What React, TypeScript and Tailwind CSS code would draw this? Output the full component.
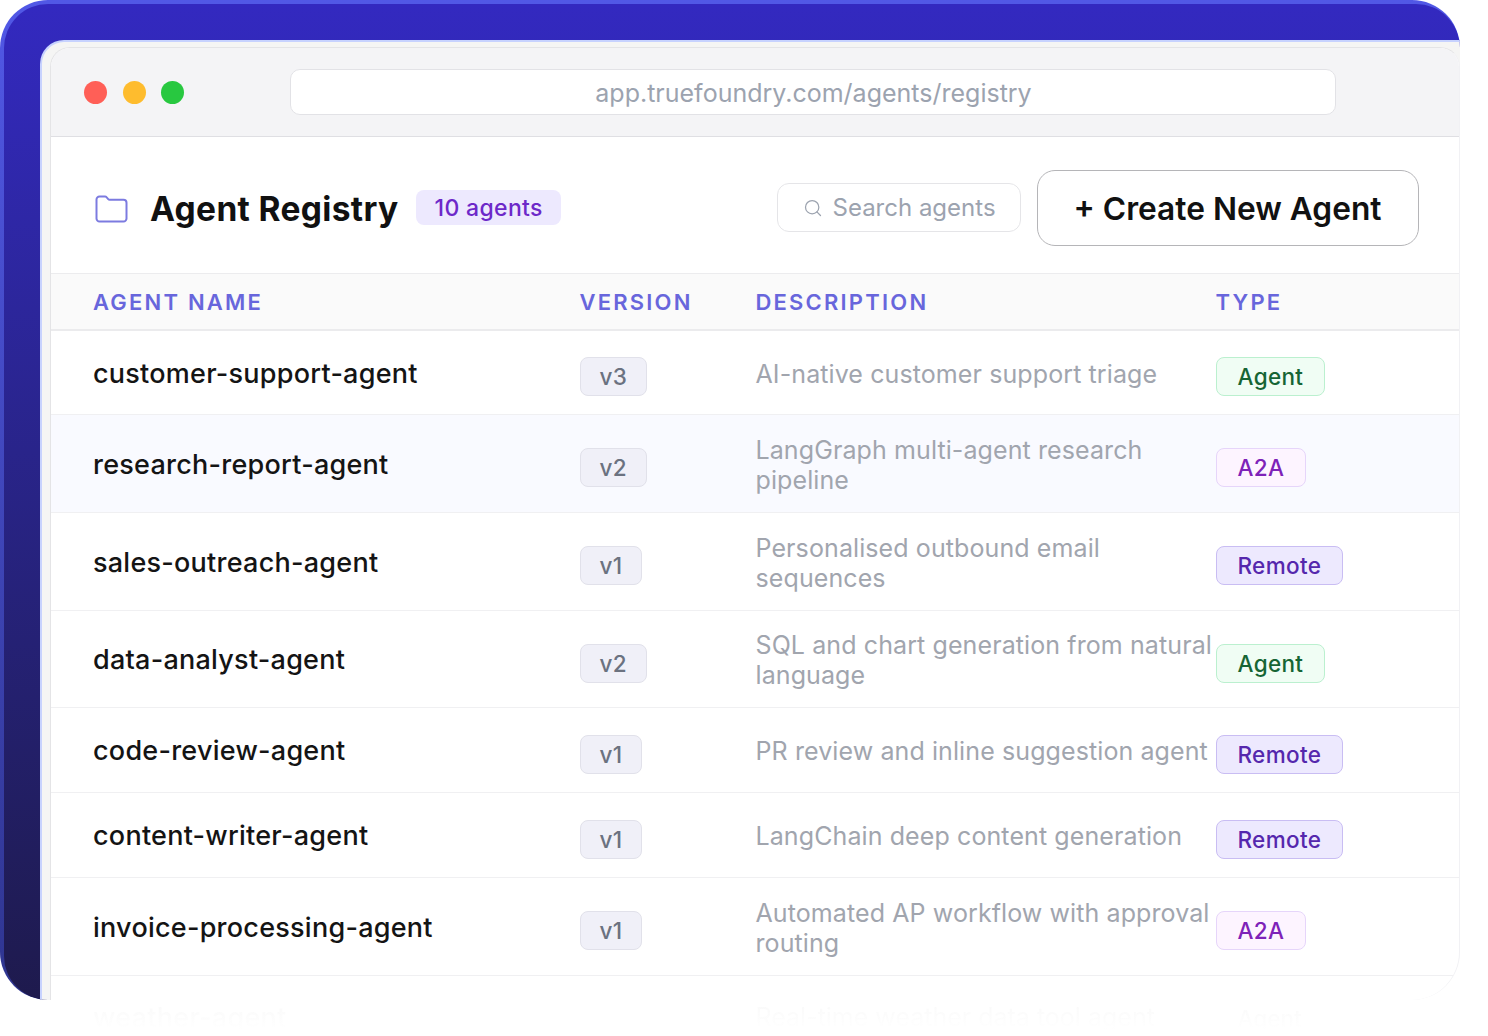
import { Search } from "lucide-react";

type AgentType = "Agent" | "A2A" | "Remote";

type AgentRow = {
  name: string;
  version: string;
  description: string;
  type: AgentType;
  height: string;
  highlighted?: boolean;
};

const agents: AgentRow[] = [
  { name: "customer-support-agent", version: "v3", description: "AI-native customer support triage", type: "Agent", height: "h-[84px]" },
  { name: "research-report-agent", version: "v2", description: "LangGraph multi-agent research pipeline", type: "A2A", height: "h-[98px]", highlighted: true },
  { name: "sales-outreach-agent", version: "v1", description: "Personalised outbound email sequences", type: "Remote", height: "h-[98px]" },
  { name: "data-analyst-agent", version: "v2", description: "SQL and chart generation from natural language", type: "Agent", height: "h-[97px]" },
  { name: "code-review-agent", version: "v1", description: "PR review and inline suggestion agent", type: "Remote", height: "h-[85px]" },
  { name: "content-writer-agent", version: "v1", description: "LangChain deep content generation", type: "Remote", height: "h-[85px]" },
  { name: "invoice-processing-agent", version: "v1", description: "Automated AP workflow with approval routing", type: "A2A", height: "h-[98px]" },
];

const typeStyles: Record<AgentType, string> = {
  Agent: "border-[#bbf0cf] bg-[#f0fdf4] text-[#166534]",
  A2A: "border-[#e6d5fa] bg-[#fdf4ff] text-[#7e22b8]",
  Remote: "border-[#c9bdf3] bg-[#ede9fe] text-[#5527ad]",
};

const columns = "grid grid-cols-[486.5px_176px_460px_1fr] pl-[42px]";
const pill = "flex h-[39px] items-center rounded-lg border pt-0.5 text-[22.5px] leading-none font-medium tracking-[0.35px]";

function FolderIcon() {
  return (
    <svg className="mt-0.5 h-7 w-[33px]" viewBox="0 0 33 28" fill="none" stroke="#7c7be0" strokeWidth="2" strokeLinejoin="round">
      <path d="M1.5 4.5a3 3 0 0 1 3-3H10a2 2 0 0 1 1.5.7l1.7 1.9a2 2 0 0 0 1.5.7H28.500a3 3 0 0 1 3 3V23.500a3 3 0 0 1-3 3h-24a3 3 0 0 1-3-3z" />
    </svg>
  );
}

function TopBar() {
  return (
    <div className="flex h-[89px] items-center border-b border-[#dfdfe3] bg-[#f4f4f6] pl-[33px]">
      <div className="flex gap-[15.5px]">
        <span className="size-[23px] rounded-full bg-[#ff5f57]" />
        <span className="size-[23px] rounded-full bg-[#febc2e]" />
        <span className="size-[23px] rounded-full bg-[#28c840]" />
      </div>
      <div className="ml-[106px] flex h-[46px] w-[1046px] items-center justify-center rounded-[10px] border border-[#e2e2e6] bg-white pt-[3px] pl-px text-[25px] text-[#9ca3af]">
        app.truefoundry.com/agents/registry
      </div>
    </div>
  );
}

function Toolbar() {
  return (
    <div className="flex h-[137px] items-center border-b border-[#ececee] pt-[5px] pr-[40.5px] pl-11">
      <FolderIcon />
      <h1 className="ml-[22px] pt-[3px] text-[33.5px] font-bold tracking-[0.35px] text-[#111111]">Agent Registry</h1>
      <span className="ml-[18px] flex h-[35px] items-center rounded-lg bg-[#ede9fe] px-[18px] pt-px text-[23px] font-medium tracking-[0.35px] text-[#6d28c9]">
        10 agents
      </span>
      <div className="ml-auto flex h-[49px] w-[244px] items-center rounded-xl border border-[#e5e5e8] pl-[25px] text-[24px] text-[#9ca3af]">
        <Search className="mr-[10px] size-5" strokeWidth={1.5} />
        Search agents
      </div>
      <button className="ml-4 h-[76px] w-[382px] rounded-[18px] border border-[#b5b5b8] pt-[3px] text-[31.7px] font-semibold text-[#111111]">
        + Create New Agent
      </button>
    </div>
  );
}

function AgentTable() {
  return (
    <div className="whitespace-nowrap">
      <div className={`${columns} h-[57px] items-center border-b-2 border-[#ebebed] bg-[#fafafa] pt-0.5 text-[22px] font-semibold tracking-[2.2px] text-[#6866dc]`}>
        <span>AGENT NAME</span>
        <span>VERSION</span>
        <span>DESCRIPTION</span>
        <span>TYPE</span>
      </div>
      {agents.map((agent) => (
        <div
          key={agent.name}
          className={`${columns} ${agent.height} items-center border-b border-[#f0f0f2] ${agent.highlighted ? "bg-[#f9faff]" : ""}`}
        >
          <span className="pt-[3px] text-[27px] font-medium tracking-[0.25px] text-[#141414]">{agent.name}</span>
          <span className="flex pt-2">
            <span className={`${pill} border-[#e1e1ea] bg-[#f0f0f8] px-[19px] text-[#6b7280]`}>{agent.version}</span>
          </span>
          <span className="w-[464px] pt-0.5 text-[25px] leading-[30px] tracking-[0.1px] whitespace-normal text-[#a1a5ae]">{agent.description}</span>
          <span className="flex pt-2">
            <span className={`${pill} ${typeStyles[agent.type]} px-[21px]`}>{agent.type}</span>
          </span>
        </div>
      ))}
    </div>
  );
}

export default function App() {
  return (
    <div className="h-[1036px] w-[1488px] overflow-hidden bg-white font-['Inter',sans-serif]">
      <div className="h-[1000px] w-[1460px] overflow-hidden rounded-[48px] rounded-br-none bg-linear-to-b from-[#5158e6] to-[#2f3590] pt-1 pl-1">
        <div className="h-full w-full rounded-tl-[44px] rounded-tr-[44px] rounded-bl-[44px] bg-linear-to-b from-[#3329c0] to-[#1e1a4d] pt-9 pl-9">
          <div className="h-[960px] w-[1420px] overflow-hidden rounded-tl-3xl border-t-2 border-l-2 border-[#c7d2fe] bg-[#f5f5f4] pt-[5px] pl-2">
            {/* lower half turns white so the rounded bottom corner blends into the page */}
            <div className="h-full bg-linear-to-b from-[#f5f5f4] from-50% to-white to-50%">
              <div className="h-full overflow-hidden rounded-t-[20px] rounded-br-[48px] border-t border-r border-l border-[#e4e4e6] border-r-[#f1f1f4] bg-white">
                <TopBar />
                <Toolbar />
                <AgentTable />
              </div>
            </div>
          </div>
        </div>
      </div>
      {/* next row, almost faded out */}
      <div className={`${columns} ml-[51px] h-[30px] items-center bg-linear-to-b from-[#f9f9f9] to-white bg-clip-text whitespace-nowrap text-transparent`}>
        <span className="pt-1 text-[27px] leading-none font-medium tracking-[0.28px]">weather-agent</span>
        <span />
        <span className="pt-1 text-[25px] leading-none">Real-time weather data tool agent</span>
        <span className="pt-2 pl-[22px] text-[22.5px] leading-none font-medium">Agent</span>
      </div>
    </div>
  );
}
